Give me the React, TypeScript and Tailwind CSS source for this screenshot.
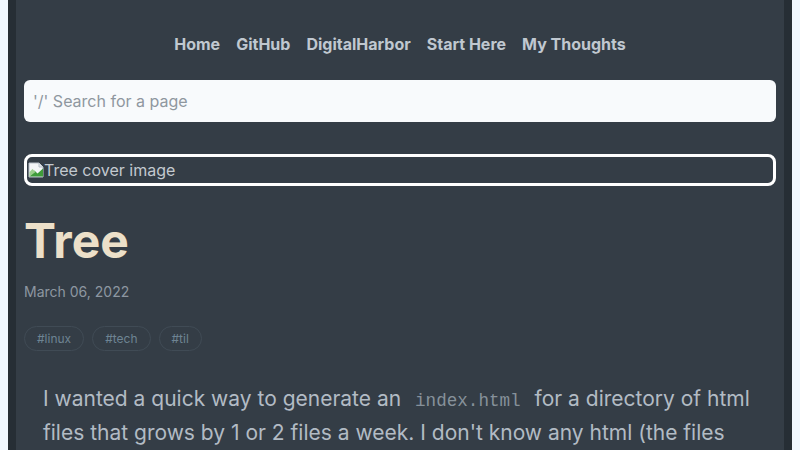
const navLinks = ["Home", "GitHub", "DigitalHarbor", "Start Here", "My Thoughts"];
const tags = ["#linux", "#tech", "#til"];

const BrokenImage = () => (
    <svg width="16" height="16" viewBox="0 0 16 16" className="shrink-0">
        <path d="M1 1h10l4 4v10H1z" fill="#f4f6f8" stroke="#b8c0c8" strokeWidth="1" />
        <path d="M11 1v4h4" fill="#dfe4e8" stroke="#b8c0c8" strokeWidth="1" />
        <path d="M1.5 14.5l5-6 3 3 5.5-5v8z" fill="#3f9c3a" />
        <path d="M1.5 10l3-3 3 3-6 4.5z" fill="#9ccf8c" />
    </svg>
);

export default function App() {
    return (
        <div className="min-h-[450px] bg-[#f0f8ff] px-2 font-['Inter',sans-serif]">
            <div className="min-h-[450px] bg-[#343d46] border-x-8 border-[#262e35] px-2 pt-8 pb-10">
                <nav className="flex justify-center">
                    {navLinks.map((link) => (
                        <a key={link} className="px-2 text-base leading-6 font-bold text-[#c0c8d0]">
                            {link}
                        </a>
                    ))}
                </nav>

                <div className="mt-6 flex h-[42px] items-center rounded-md bg-[#f8fafc] px-[9px]">
                    <span className="text-base text-[#8f979f]">'/' Search for a page</span>
                </div>

                <div className="mt-8 flex h-8 items-center rounded-lg border-[3px] border-white px-px">
                    <BrokenImage />
                    <span className="text-base leading-6 text-[#c3c9cf]">Tree cover image</span>
                </div>

                <h1 className="mt-[31px] text-5xl leading-[48px] font-bold text-[#ece0c9]">Tree</h1>

                <p className="mt-[17px] text-sm leading-5 text-[#8d97a1]">March 06, 2022</p>

                <div className="mt-6 flex gap-2">
                    {tags.map((tag) => (
                        <span
                            key={tag}
                            className="rounded-full border border-[#404b55] px-3 text-xs leading-[23px] text-[#6e8493]"
                        >
                            {tag}
                        </span>
                    ))}
                </div>

                <p className="mt-8 px-[19px] text-[21px] leading-8 text-[#b2bbc4]">
                    I wanted a quick way to generate an{" "}
                    <code className="px-2 font-['Liberation_Mono',monospace] text-[17.6px] text-[#86919a]">index.html</code>{" "}
                    for a directory of html files that grows by 1 or 2 files a week. I don't know any html (the files
                    are generated from markdown), so I went looking for a tool.
                </p>
            </div>
        </div>
    );
}
